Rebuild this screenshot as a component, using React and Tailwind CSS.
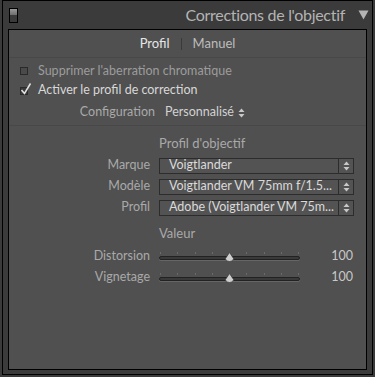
import React from 'react'

const font = { fontFamily: 'Lato, "Open Sans", sans-serif' }

const Stepper = () => (
  <svg width="7" height="10" viewBox="0 0 7 10" className="fill-[#c8c8c8]">
    <path d="M3.5 0.5 L6.5 4 L0.5 4 Z" />
    <path d="M0.5 6 L6.5 6 L3.5 9.5 Z" />
  </svg>
)

const SelectRow = ({ label, value }) => (
  <div className="flex items-center h-[21px]">
    <div className="w-[142px] text-right pr-[1px] text-[#a9a9a9]">{label}</div>
    <div className="ml-[8px] flex h-[16px] w-[195px] items-center border border-[#2c2c2c] bg-[#535353]">
      <div className="flex-1 pl-[9px] text-[#dadada] leading-none whitespace-nowrap">{value}</div>
      <div className="flex h-full w-[15px] items-center justify-center border-l border-[#2c2c2c]">
        <Stepper />
      </div>
    </div>
  </div>
)

const SliderRow = ({ label, value }) => (
  <div className="flex items-center h-[21px]">
    <div className="w-[142px] text-right pr-[1px] text-[#a9a9a9]">{label}</div>
    <div className="relative ml-[8px] h-[12px] w-[141px]">
      <div className="absolute left-0 right-0 top-[1px] flex justify-between px-[1px]">
        {[0, 1, 2, 3, 4, 5, 6, 7, 8].map((i) => (
          <div key={i} className="h-[2px] w-[1px] bg-[#6a6a6a]" />
        ))}
      </div>
      <div className="absolute left-0 right-0 top-[5px] h-[4px] rounded-full border border-[#222] bg-[#3a3a3a] shadow-[0_1px_0_#666]" />
      <svg className="absolute left-[66px] top-[1px]" width="9" height="10" viewBox="0 0 9 10">
        <path d="M4.5 0.5 L8.5 6.5 Q8.5 9.5 4.5 9.5 Q0.5 9.5 0.5 6.5 Z" fill="#cfcfcf" stroke="#2a2a2a" strokeWidth="0.6" />
      </svg>
    </div>
    <div className="ml-auto pr-[13px] text-[#c8c8c8]">{value}</div>
  </div>
)

export default function App() {
  return (
    <div className="w-[375px] h-[377px] bg-[#3b3b3b] text-[12.5px]" style={font}>
      <div className="ml-[2px] h-[375px] w-[371px] border-x border-t border-b border-black bg-[#3b3b3b] flex flex-col">
        {/* header */}
        <div className="flex h-[28px] items-center pl-[6px] pr-[3px]">
          <div className="flex h-[15px] w-[9px] flex-col border border-black">
            <div className="flex-1 bg-gradient-to-b from-[#9a9a9a] to-[#6e6e6e]" />
            <div className="flex-1 bg-[#3a3a3a]" />
          </div>
          <div className="ml-auto text-[16px] text-[#b4b4b4] tracking-[-0.3px]">Corrections de l'objectif</div>
          <svg className="ml-[13px]" width="11" height="10" viewBox="0 0 11 10">
            <path d="M0.5 0.5 L10.5 0.5 L5.5 9.5 Z" fill="#b4b4b4" />
          </svg>
        </div>

        {/* body */}
        <div className="mx-[5px] flex-1 mb-[4px] border border-black bg-[#505050]">
          <div className="flex h-[28px] items-center justify-center border-b border-[#484848] text-[13px]">
            <span className="text-[#e6e6e6]">Profil</span>
            <span className="mx-[11px] h-[12px] w-[1px] bg-[#3a3a3a]" />
            <span className="text-[#bdbdbd]">Manuel</span>
          </div>

          <div className="pt-[3px]">
            <div className="flex h-[20px] items-center pl-[11px]">
              <div className="h-[8px] w-[8px] border border-[#2a2a2a] bg-[#4a4a4a]" />
              <span className="ml-[10px] text-[#9c9c9c]">Supprimer l'aberration chromatique</span>
            </div>
            <div className="flex h-[19px] items-center pl-[11px]">
              <div className="relative h-[8px] w-[8px] border border-[#2a2a2a] bg-[#3a3a3a]">
                <svg className="absolute -top-[5px] left-[0px]" width="10" height="12" viewBox="0 0 10 12">
                  <path d="M0.5 7 L3.5 10.5 L9.5 0.5" fill="none" stroke="#e0e0e0" strokeWidth="1.6" />
                </svg>
              </div>
              <span className="ml-[10px] text-[#d8d8d8]">Activer le profil de correction</span>
            </div>
          </div>

          <div className="flex h-[26px] items-center border-b border-[#484848]">
            <div className="w-[146px] text-right text-[#a9a9a9]">Configuration</div>
            <div className="ml-[10px] flex items-center text-[#d2d2d2]">
              Personnalisé
              <span className="ml-[4px]"><Stepper /></span>
            </div>
          </div>

          <div className="flex h-[28px] items-end pb-[1px] pl-[150px] text-[#a9a9a9] text-[13px]">Profil d'objectif</div>
          <div className="pt-[1px]">
            <SelectRow label="Marque" value="Voigtlander" />
            <SelectRow label="Modèle" value="Voigtlander VM 75mm f/1.5..." />
            <SelectRow label="Profil" value="Adobe (Voigtlander VM 75m..." />
          </div>

          <div className="flex h-[26px] items-end pb-[1px] pl-[150px] text-[#a9a9a9] text-[13px]">Valeur</div>
          <div className="pt-[2px]">
            <SliderRow label="Distorsion" value="100" />
            <SliderRow label="Vignetage" value="100" />
          </div>
        </div>
      </div>
    </div>
  )
}
